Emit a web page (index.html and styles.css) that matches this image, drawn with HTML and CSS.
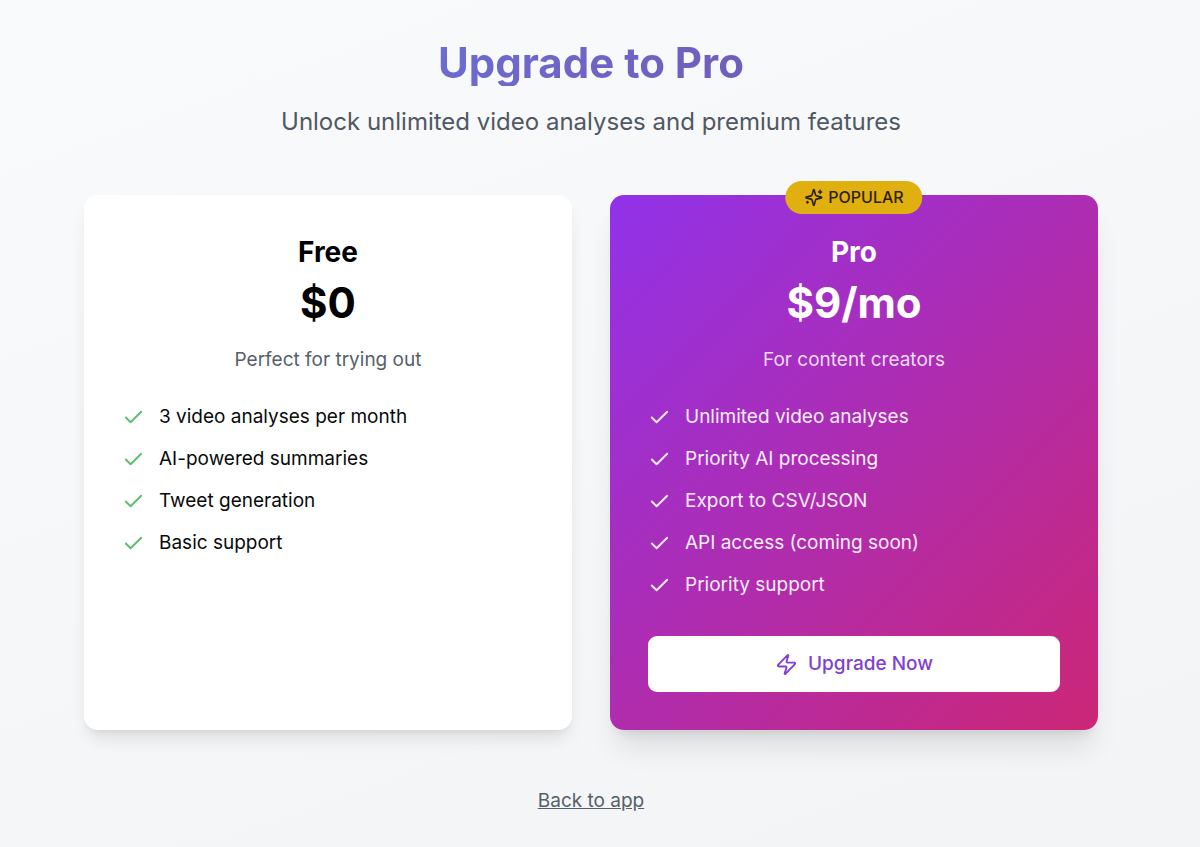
FILE: index.html
```html
<!DOCTYPE html>
<html lang="en">
<head>
	<meta charset="utf-8">
	<meta name="viewport" content="width=device-width, initial-scale=1">
	<title>Upgrade to Pro</title>
	<link rel="stylesheet" href="styles.css">
</head>
<body>
	<!-- Shared icons -->
	<svg class="sprite" aria-hidden="true">
		<symbol id="check" viewBox="0 0 24 24"><path d="M20 6 9 17l-5-5"/></symbol>
		<symbol id="zap" viewBox="0 0 24 24"><path d="M4 14a1 1 0 0 1-.78-1.63l9.9-10.2a.5.5 0 0 1 .86.46l-1.92 6.02A1 1 0 0 0 13 10h7a1 1 0 0 1 .78 1.63l-9.9 10.2a.5.5 0 0 1-.86-.46l1.92-6.02A1 1 0 0 0 11 14z"/></symbol>
		<symbol id="sparkles" viewBox="0 0 24 24"><path d="M9.937 15.5A2 2 0 0 0 8.5 14.063l-6.135-1.582a.5.5 0 0 1 0-.962L8.5 9.936A2 2 0 0 0 9.937 8.5l1.582-6.135a.5.5 0 0 1 .963 0L14.063 8.5A2 2 0 0 0 15.5 9.937l6.135 1.581a.5.5 0 0 1 0 .964L15.5 14.063a2 2 0 0 0-1.437 1.437l-1.582 6.135a.5.5 0 0 1-.963 0z"/><path d="M20 3v4M22 5h-4M4 17v2M5 18H3"/></symbol>
	</svg>

	<main class="container">
		<header class="intro">
			<h1>Upgrade to Pro</h1>
			<p>Unlock unlimited video analyses and premium features</p>
		</header>

		<div class="plans">
			<section class="card">
				<h2>Free</h2>
				<div class="price">$0</div>
				<p class="tagline">Perfect for trying out</p>
				<ul class="features">
					<li><svg class="icon"><use href="#check"/></svg>3 video analyses per month</li>
					<li><svg class="icon"><use href="#check"/></svg>AI-powered summaries</li>
					<li><svg class="icon"><use href="#check"/></svg>Tweet generation</li>
					<li><svg class="icon"><use href="#check"/></svg>Basic support</li>
				</ul>
			</section>

			<section class="card card-pro">
				<span class="badge"><svg class="icon icon-small"><use href="#sparkles"/></svg>POPULAR</span>
				<h2>Pro</h2>
				<div class="price">$9/mo</div>
				<p class="tagline">For content creators</p>
				<ul class="features">
					<li><svg class="icon"><use href="#check"/></svg>Unlimited video analyses</li>
					<li><svg class="icon"><use href="#check"/></svg>Priority AI processing</li>
					<li><svg class="icon"><use href="#check"/></svg>Export to CSV/JSON</li>
					<li><svg class="icon"><use href="#check"/></svg>API access (coming soon)</li>
					<li><svg class="icon"><use href="#check"/></svg>Priority support</li>
				</ul>
				<button type="button" class="upgrade"><svg class="icon"><use href="#zap"/></svg>Upgrade Now</button>
			</section>
		</div>

		<footer class="back"><a href="#">Back to app</a></footer>
	</main>
</body>
</html>
```
FILE: styles.css
```css
* { box-sizing: border-box; }
h1, h2, p, ul { margin: 0; padding: 0; }
body {
	margin: 0;
	min-height: 100vh;
	padding: 39px 102px 30px 84px;
	background: linear-gradient(160deg, #f9fafb, #f3f4f6);
	font: 19px/28px Inter, sans-serif;
	color: #0a0a0a;
}
.sprite { display: none; }
.icon {
	flex: none;
	width: 23px;
	height: 23px;
	fill: none;
	stroke: currentColor;
	stroke-width: 2;
	stroke-linecap: round;
	stroke-linejoin: round;
}
.icon-small { width: 19px; height: 19px; }
.container { max-width: 1052px; margin: 0 auto; }

/* Heading */
.intro { margin-bottom: 57px; text-align: center; }
.intro h1 {
	margin-bottom: 19px;
	font-size: 42px;
	line-height: 47px;
	background: linear-gradient(135deg, #667eea, #764ba2);
	-webkit-background-clip: text;
	background-clip: text;
	color: transparent;
}
.intro p { font-size: 24px; line-height: 33px; color: #4f5863; }

/* Plans */
.plans { display: grid; grid-template-columns: 1fr 1fr; gap: 38px; }
.card {
	position: relative;
	padding: 38px;
	border-radius: 14px;
	background: #fff;
	box-shadow: 0 12px 18px -4px rgba(0, 0, 0, .1), 0 5px 7px -5px rgba(0, 0, 0, .1);
	text-align: center;
}
.card h2 { margin-bottom: 8px; font-size: 28px; line-height: 38px; color: #000; }
.price { margin-bottom: 20px; font-size: 42px; line-height: 47px; font-weight: 700; color: #000; }
.tagline { margin-bottom: 29px; color: #566069; }
.features { display: grid; gap: 14px; list-style: none; text-align: left; }
.features li { display: flex; align-items: center; gap: 14px; }
.features .icon { color: #5abf6e; }

.card-pro {
	background: linear-gradient(135deg, #9132e9, #cc2776);
	box-shadow: 0 23px 29px -6px rgba(0, 0, 0, .1), 0 9px 12px -7px rgba(0, 0, 0, .1);
	color: #fbeefc;
}
.card-pro h2, .card-pro .price { color: #fff; }
.card-pro .features .icon { color: #fbeefc; }
.card-pro .tagline { color: #f0daf8; }
.badge {
	position: absolute;
	top: -14px;
	left: 50%;
	transform: translateX(-50%);
	display: flex;
	align-items: center;
	gap: 5px;
	padding: 5px 19px;
	border-radius: 17px;
	background: #e0b010;
	color: #2e1f05;
	font-size: 16px;
	line-height: 23px;
	font-weight: 500;
}
.upgrade {
	display: flex;
	align-items: center;
	justify-content: center;
	gap: 10px;
	width: 100%;
	margin-top: 37px;
	padding: 14px;
	border: 0;
	border-radius: 9px;
	background: #fff;
	color: #8040d0;
	font: 500 19px/28px Inter, sans-serif;
	cursor: pointer;
}

.back { margin-top: 57px; text-align: center; }
.back a { color: #566069; }
```
